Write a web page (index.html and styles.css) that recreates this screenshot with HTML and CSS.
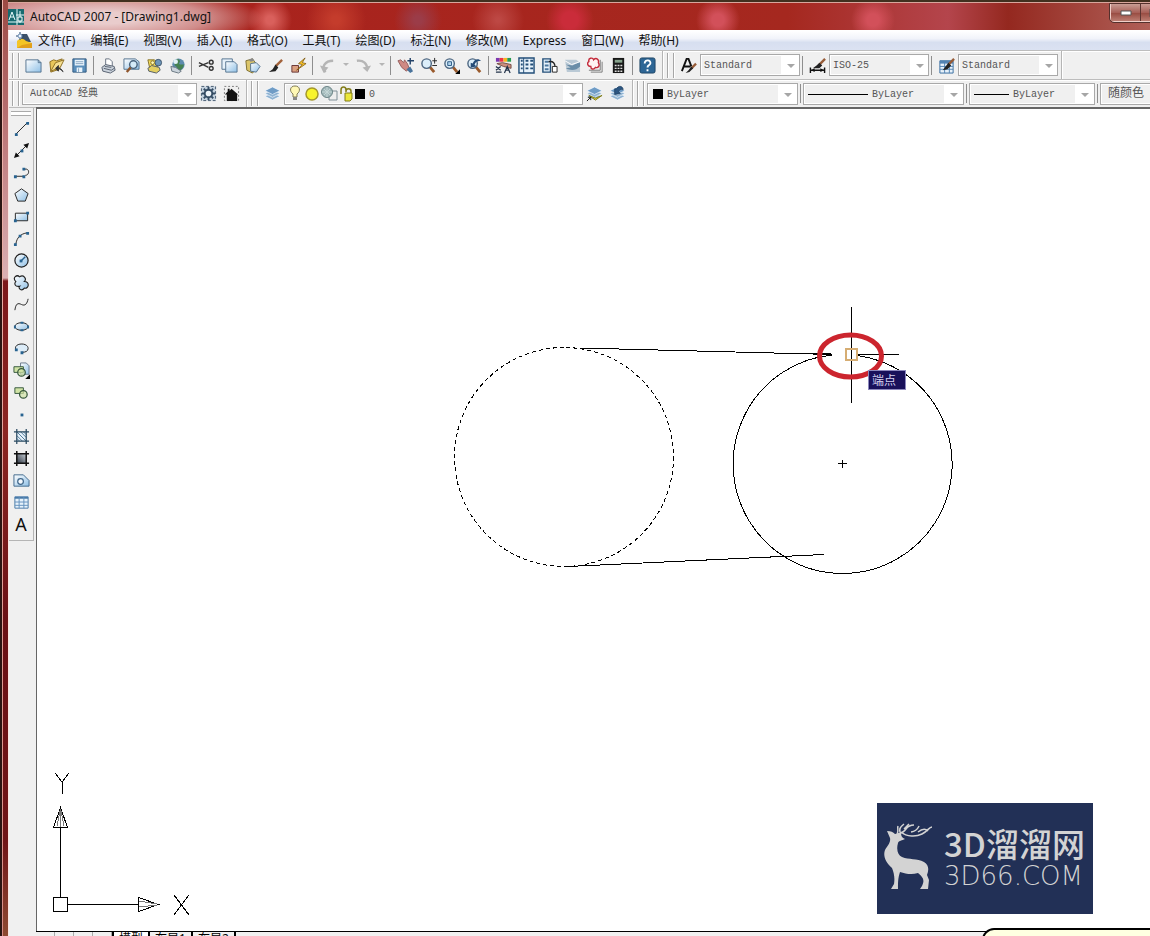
FILE: index.html
```html
<!DOCTYPE html>
<html lang="zh-CN">
<head>
<meta charset="utf-8">
<title>AutoCAD 2007 - [Drawing1.dwg]</title>
<link rel="stylesheet" href="styles.css">
</head>
<body>
<svg class="defs" aria-hidden="true">
  <defs>
    <linearGradient id="blue" x1="0" y1="0" x2="1" y2="1"><stop offset="0" stop-color="#fff"/><stop offset="1" stop-color="#8fc0e6"/></linearGradient>
    <linearGradient id="shade" x1="0" y1="1" x2="1" y2="0"><stop offset="0" stop-color="#2b333f"/><stop offset="1" stop-color="#c8cfd6"/></linearGradient>
    <symbol id="lens" viewBox="0 0 18 18"><path d="M10 10l5 6" stroke="#9a5a2c" stroke-width="3"/><circle cx="7" cy="7" r="5" fill="#dceefa" stroke="#4d6680" stroke-width="1.5"/></symbol>
    <symbol id="brush" viewBox="0 0 18 18"><path d="M16 3L9 10" stroke="#a2623a" stroke-width="2.5"/><path d="M9 8l3 3-3 4-7 1 4-3z" fill="#222"/></symbol>
    <symbol id="stack" viewBox="0 0 18 18"><g fill="#8fb3d2" stroke="#f7fbff" stroke-width=".7"><path d="M1 12l8-4 8 4-8 4z"/><path d="M1 9l8-4 8 4-8 4z"/><path d="M1 6l8-4 8 4-8 4z" fill="#6f9cc6"/></g></symbol>
  </defs>
</svg>
<div class="window">
  <header class="titlebar">
    <svg class="appicon" width="16" height="16" viewBox="0 0 16 16"><path fill="#176b70" d="M0 0h16v16H0z"/><path d="M1 11L4 3l3 8M2 8h4M9 0v16M0 13h16M12 2v12M8 6h8" stroke="#e6fafa" fill="none"/><path d="M10 8h4v4h-4z" fill="#176b70" stroke="#fff"/></svg>
    <h1 class="caption">AutoCAD 2007 - [Drawing1.dwg]</h1>
    <div class="controls">
      <button class="ctl" aria-label="最小化"><svg width="12" height="6"><path d="M1 1h10v4H1z" fill="#fff" stroke="#555"/></svg></button>
      <button class="ctl" aria-label="还原"><svg width="12" height="10"><path d="M1 1h10v8H1zM4 4h4v2H4z" fill="#fff" fill-rule="evenodd" stroke="#555"/></svg></button>
    </div>
  </header>
  <div class="client">
    <nav class="menubar">
      <svg width="17" height="17" viewBox="0 0 17 17"><path d="M5 2h6l4 8H5z" fill="#3d5168"/><path d="M1 9c3-3 6-3 9 0l6 2v5H1z" fill="#f4c526"/><path d="M6 13l10-2v5H1z" fill="#e2a01c"/><path d="M4 0v8M0 4h8" stroke="#27466e"/><circle cx="4" cy="4" r="2" fill="#eef6ff" stroke="#6c8db3"/></svg>
      <a href="#">文件(F)</a><a href="#">编辑(E)</a><a href="#">视图(V)</a><a href="#">插入(I)</a><a href="#">格式(O)</a><a href="#">工具(T)</a><a href="#">绘图(D)</a><a href="#">标注(N)</a><a href="#">修改(M)</a><a href="#">Express</a><a href="#">窗口(W)</a><a href="#">帮助(H)</a>
    </nav>
    <div class="row">
      <div class="toolbar" role="toolbar" aria-label="标准">
        <i class="grip"></i>
        <button aria-label="新建"><svg viewBox="0 0 18 18"><path d="M1 3h13l3 3v10H1z" fill="url(#blue)" stroke="#54738f"/><path d="M14 3v3h3" fill="none" stroke="#54738f"/></svg></button>
        <button aria-label="打开"><svg viewBox="0 0 18 18"><path d="M2 5l4-2 3 1 6-2-3 11-9 3z" fill="#e8c65a" stroke="#8c6d22"/><path d="M3 15L8 6l9-3-4 8z" fill="#f5df92" stroke="#8c6d22"/><path d="M16 16c-1-3-3-4-5-4m0-3v6l-3-3z" fill="#333" stroke="#333"/></svg></button>
        <button aria-label="保存"><svg viewBox="0 0 18 18"><path d="M2 2h14v14H2z" fill="#5b8fbb" stroke="#2f587e"/><path d="M4 3h10v6H4zM6 11h6v5H6z" fill="#eaf4fb"/><path d="M5 5h8M5 7h8M8 12v4" stroke="#87a6c0"/></svg></button>
        <i class="sep"></i>
        <button aria-label="打印"><svg viewBox="0 0 18 18"><path d="M6 9V2h4l3 3v5" fill="#fff" stroke="#66717f"/><path d="M2 11l4-3 9 2 1 4-5 3-8-2z" fill="#cbd3dc" stroke="#56606e"/><path d="M4 12l8 2 3-2M5 10l7 1" stroke="#56606e" fill="none"/></svg></button>
        <button aria-label="打印预览"><svg viewBox="0 0 18 18"><path d="M1 2h12l4 3v8H1z" fill="url(#blue)" stroke="#54738f"/><circle cx="11" cy="8" r="4" fill="#d4eaf8" stroke="#48627c" stroke-width="1.500"/><path d="M8 11l-4 5" stroke="#8f552b" stroke-width="2.500"/></svg></button>
        <button aria-label="发布"><svg viewBox="0 0 18 18"><path d="M2 3h7l3 3v6H4z" fill="#f4dc5a" stroke="#836f25"/><circle cx="13" cy="6" r="3.500" fill="#6d95b9" stroke="#40566b"/><path d="M2 12l4-3 8 2 1 3-4 3-8-2z" fill="#e3cf62" stroke="#505a66"/><circle cx="7" cy="6" r="2" fill="#fff7b2" stroke="#836f25"/></svg></button>
        <button aria-label="三维 DWF"><svg viewBox="0 0 18 18"><circle cx="10" cy="8" r="6.500" fill="#5d8cae"/><path d="M6 4c4-4 7 0 5 2s3 2 5 2c-1 5-5 7-6 6s-1-4-4-5z" fill="#468252"/><circle cx="7" cy="5" r="2.500" fill="#e2f1f8"/><path d="M2 10l5 1 6 4-3 2-7-2z" fill="#cbd4dc" stroke="#687681"/></svg></button>
        <i class="sep"></i>
        <button aria-label="剪切"><svg viewBox="0 0 18 18"><path d="M1 6l10 5M1 10l10-4" stroke="#333" stroke-width="1.500"/><circle cx="14" cy="5.500" r="2" fill="none" stroke="#333" stroke-width="1.500"/><circle cx="14" cy="12" r="2" fill="none" stroke="#333" stroke-width="1.500"/></svg></button>
        <button aria-label="复制"><svg viewBox="0 0 18 18"><path d="M1 2h11v11H1z" fill="#e7f2fa" stroke="#54738f"/><path d="M5 5h9l3 3v8H5z" fill="url(#blue)" stroke="#54738f"/></svg></button>
        <button aria-label="粘贴"><svg viewBox="0 0 18 18"><path d="M2 4l7-2 6 8-6 7-6-3z" fill="#dcc66b" stroke="#7d6d2f"/><path d="M7 7l6-1 4 4-4 6-6-1z" fill="url(#blue)" stroke="#54738f"/><path d="M5 3l4-2 2 3-4 1z" fill="#888"/></svg></button>
        <button aria-label="特性匹配"><svg><use href="#brush"/></svg></button>
        <button aria-label="块编辑器"><svg viewBox="0 0 18 18"><path d="M2 9h7v7H2z" fill="#dba081" stroke="#633"/><path d="M16 1L9 7l4 1-6 6 10-7-4-1z" fill="#ffc928" stroke="#78530d" stroke-width=".8"/></svg></button>
        <i class="sep"></i>
        <button aria-label="放弃"><svg viewBox="0 0 18 18"><path d="M7 16C2 11 6 4 15 4" fill="none" stroke="#b5b5b5" stroke-width="2.500"/><path d="M1 9l9 2-5 6z" fill="#b5b5b5"/></svg></button><button class="drop" aria-label="放弃列表"><svg viewBox="0 0 6 4"><path d="M0 0h6L3 3z" fill="#b5b5b5"/></svg></button>
        <button aria-label="重做"><svg viewBox="0 0 18 18"><path d="M2 4c7-1 11 3 11 9" fill="none" stroke="#b5b5b5" stroke-width="2.500"/><path d="M8 11l9-2-4 7z" fill="#b5b5b5"/></svg></button><button class="drop" aria-label="重做列表"><svg viewBox="0 0 6 4"><path d="M0 0h6L3 3z" fill="#b5b5b5"/></svg></button>
        <i class="sep"></i>
        <button aria-label="实时平移"><svg viewBox="0 0 18 18"><path d="M1 4l3-1 3 3 1-3 3 4 2 5-3 3-5-4z" fill="#cf8983" stroke="#95605d"/><path d="M10 13l4-3 3 5-3 2z" fill="#49739b"/><path d="M14 1v7M11 4h7" stroke="#234268" stroke-width="1.500"/></svg></button>
        <button aria-label="实时缩放"><svg viewBox="0 0 18 18"><use href="#lens"/><path d="M13 4h5M15.500 1v6M13 9h5" stroke="#222"/></svg></button>
        <button aria-label="窗口缩放"><svg viewBox="0 0 18 18"><use href="#lens"/><path d="M5 5h4v4H5z" fill="#b1d3eb" stroke="#2c5b86"/><path d="M18 13v5h-5z"/></svg></button>
        <button aria-label="缩放上一个"><svg viewBox="0 0 18 18"><use href="#lens"/><path d="M5 6v5l6-1-2-2c1-3 4-4 7-4-3-3-7-2-9 3z" fill="#244c78"/></svg></button>
        <i class="sep"></i>
        <button aria-label="特性"><svg viewBox="0 0 18 18"><path d="M1 1h4v4H1z" fill="#7d38b0"/><path d="M5 1h4v4H5z" fill="#e34"/><path d="M9 1h4v4H9z" fill="#f6b521"/><path d="M13 1h4v4h-4z" fill="#279c50"/><path d="M2 7l6-1 9 2v4l-8-2z" fill="#cd8e7d" stroke="#734b44"/><path d="M1 10l5 4m0-4l-5 4m0 2h6m3 1l3-7 3 7m-5-3h4" fill="none" stroke="#24344b" stroke-width="1.300"/></svg></button>
        <button aria-label="设计中心"><svg viewBox="0 0 18 18"><path d="M1 1h16v16H1z" fill="#e7f2fb" stroke="#234e78" stroke-width="1.500"/><path d="M6 1v16" stroke="#234e78"/><path d="M3 4h2M3 8h2M3 12h2M8 4h3m2 0h3M8 8h3m2 0h3M8 12h3m2 0h3" stroke="#234e78" stroke-width="2"/></svg></button>
        <button aria-label="工具选项板"><svg viewBox="0 0 18 18"><path d="M2 2h8v14H2zM2 2v14" fill="#e7f2fb" stroke="#234e78" stroke-width="1.500"/><path d="M4 5h4M4 9h4M4 13h4" stroke="#4c779e" stroke-width="2"/><path d="M8 5c5-1 7 2 7 6" fill="none" stroke="#222" stroke-width="1.500"/><path d="M12 10h5v6h-5z" fill="#fff" stroke="#222"/></svg></button>
        <button aria-label="图纸集"><svg viewBox="0 0 18 18"><path d="M1 3h12l4 3v10H3z" fill="#bac9d5"/><path d="M2 8l7 1 8-4v5c-4 4-9 5-15 2l5-1z" fill="#6a8da8"/><path d="M1 4l7 4 9-3" stroke="#fff" fill="none"/></svg></button>
        <button aria-label="标记集"><svg viewBox="0 0 18 18"><path d="M4 16h12V5m-14 9h12V3" fill="none" stroke="#777"/><path d="M2 5c-1-4 4-5 5-2 3-3 6 0 5 3 2 3 0 6-3 5-2 3-5 2-5-1-4 0-4-4-2-5z" fill="#fff3f3" stroke="#c32b3b" stroke-width="1.500"/></svg></button>
        <button aria-label="快速计算器"><svg viewBox="0 0 18 18"><path d="M3 1h12v16H3z" fill="#181818"/><path d="M5 3h8v3H5z" fill="#86a28c"/><path d="M5 9h2m1 0h2m1 0h2M5 12h2m1 0h2m1 0h2M5 15h2m1 0h2m1 0h2" stroke="#ddd" stroke-width="1.500"/></svg></button>
        <i class="sep"></i>
        <button aria-label="帮助"><svg viewBox="0 0 18 18"><rect x="1" y="1" width="16" height="16" rx="2" fill="#2e6695" stroke="#1e4565"/><path d="M6 7c0-5 7-4 6 0-1 2-3 2-3 4m0 2v2" fill="none" stroke="#fff" stroke-width="2"/></svg></button>
        <i class="end"></i>
      </div>
      <div class="toolbar" role="toolbar" aria-label="样式">
        <i class="grip"></i>
        <button aria-label="文字样式" class="wide"><svg viewBox="0 0 18 18"><path d="M2 15L7 2h2l3 8M4 10h7" fill="none" stroke="#111" stroke-width="2"/><path d="M17 7l-5 5" stroke="#965b37" stroke-width="2.500"/><path d="M12 10l2 2-4 4-4 1 3-3z" fill="#222"/></svg></button>
        <select class="combo style" aria-label="文字样式列表"><option>Standard</option></select>
        <i class="sep"></i>
        <button aria-label="标注样式" class="wide"><svg viewBox="0 0 18 18"><path d="M1.500 11v6M16.500 11v6M2 14h14" stroke="#111" stroke-width="1.500"/><path d="M2 14l4-2v4zM16 14l-4-2v4z" fill="#111"/><path d="M17 2l-6 6" stroke="#965b37" stroke-width="2.500"/><path d="M11 6l3 3-3 3H4l4-3z" fill="#222"/></svg></button>
        <select class="combo style" aria-label="标注样式列表"><option>ISO-25</option></select>
        <i class="sep"></i>
        <button aria-label="表格样式" class="wide"><svg viewBox="0 0 18 18"><path d="M2 4h14v13H2z" fill="#e7f2fb" stroke="#356a9e"/><path d="M2 4h14v3H2z" fill="#5283b3"/><path d="M2 10h14M2 13h14M7 5v12M12 5v12" stroke="#5283b3"/><path d="M17 2l-6 6" stroke="#965b37" stroke-width="2.500"/><path d="M11 6l3 3-4 4-5 1 3-4z" fill="#222"/></svg></button>
        <select class="combo style" aria-label="表格样式列表"><option>Standard</option></select>
        <i class="end"></i>
      </div>
    </div>
    <div class="row">
      <div class="toolbar" role="toolbar" aria-label="工作空间">
        <i class="grip"></i>
        <select class="combo workspace" aria-label="工作空间列表"><option>AutoCAD 经典</option></select>
        <button aria-label="工作空间设置"><svg viewBox="0 0 18 18"><path d="M1.500 1.500h15v15h-15z" fill="#c3d1de" stroke="#42576c" stroke-dasharray="3 2"/><circle cx="9" cy="9" r="4" fill="#eef4f9" stroke="#334b63" stroke-width="2"/><path d="M9 2v3m0 8v3M2 9h3m8 0h3M4 4l2 2m6 6l2 2M14 4l-2 2m-6 6l-2 2" stroke="#334b63" stroke-width="2"/></svg></button>
        <button aria-label="我的工作空间"><svg viewBox="0 0 18 18"><path d="M1.500 1.500h15v15h-15z" fill="none" stroke="#777" stroke-dasharray="2 2"/><path d="M9 4l7 6h-1v7H4v-7H2l3-3V4h2v2z" fill="#111"/></svg></button>
        <i class="end"></i>
      </div>
      <div class="toolbar" role="toolbar" aria-label="图层">
        <i class="grip"></i>
        <button aria-label="图层特性管理器"><svg><use href="#stack"/></svg></button>
        <label class="combo layer"><svg width="78" height="18" viewBox="0 0 78 18"><path d="M7 1c5 0 6 5 2 8v3H5V9C1 6 2 1 7 1z" fill="#fff8b5" stroke="#827d56"/><path d="M5 12h4v3H5z" fill="#888"/><circle cx="24" cy="9" r="6" fill="#f7f32c" stroke="#a4982a" stroke-width="1.500"/><path d="M41 6h8v9h-8z" fill="#eee" stroke="#809098"/><circle cx="39" cy="7" r="5.500" fill="#a1b7b9" stroke="#6c8587"/><path d="M36 4l6 6m0-6l-6 6m3-8v10m-5-5h10" stroke="#c4d6d6"/><path d="M53 9V5c0-4 5-4 5 0v2m0-1c0-3 5-3 5 0v3" fill="none" stroke="#827d19" stroke-width="1.500"/><path d="M57 8h7v6l-2 2h-5z" fill="#ece83a" stroke="#827d19"/><path d="M67 4h10v10H67z"/></svg><select aria-label="图层"><option>0</option></select></label>
        <button aria-label="将对象的图层置为当前"><svg viewBox="0 0 18 18"><use href="#stack"/><path d="M3 11l7 3 7-3-7 5z" fill="#e2d547" stroke="#827d19"/><path d="M1 17l4-4m0 0v3m0-3H2" stroke="#111" fill="none"/></svg></button>
        <button aria-label="上一个图层"><svg viewBox="0 0 18 18"><use href="#stack"/><path d="M6 4v6l6-1-2-2c1-2 3-3 5-2 0-4-5-5-7-1z" fill="#2d5783" stroke="#173656" stroke-width=".7"/></svg></button>
        <i class="end"></i>
      </div>
      <div class="toolbar tail" role="toolbar" aria-label="对象特性">
        <i class="grip"></i>
        <label class="combo color"><svg width="12" height="12"><path d="M1 1h10v10H1z"/></svg><select aria-label="颜色"><option>ByLayer</option></select></label>
        <i class="sep"></i>
        <label class="combo linetype"><svg width="60" height="12"><path d="M0 6.500h60" stroke="#000"/></svg><select aria-label="线型"><option>ByLayer</option></select></label>
        <i class="sep"></i>
        <label class="combo weight"><svg width="35" height="12"><path d="M0 6.500h35" stroke="#000"/></svg><select aria-label="线宽"><option>ByLayer</option></select></label>
        <i class="sep"></i>
        <select class="combo plot" aria-label="打印样式"><option>随颜色</option></select>
      </div>
    </div>
    <main class="work">
      <aside class="side">
        <div class="palette" role="toolbar" aria-label="绘图">
          <i class="hgrip"></i>
          <button aria-label="直线"><svg viewBox="0 0 18 18"><path d="M3 15L15 3" stroke="#222"/><path d="M2 14h3v3H2zM14 2h3v3h-3z" fill="#286390"/></svg></button>
          <button aria-label="构造线"><svg viewBox="0 0 18 18"><path d="M3 15L15 3" stroke="#222"/><path d="M1 17l2-6 4 4zM17 1l-2 6-4-4z" fill="#111"/><path d="M8 8h3v3H8z" fill="#286390"/></svg></button>
          <button aria-label="多段线"><svg viewBox="0 0 18 18"><path d="M3 13h8M11 6c7-3 7 6 2 6" fill="none" stroke="#222"/><path d="M1 12h3v3H1zM10 12h3v3h-3zM10 4h3v3h-3z" fill="#286390"/></svg></button>
          <button aria-label="正多边形"><svg viewBox="0 0 18 18"><path d="M9 3l7 5-3 8H5L2 8z" fill="url(#blue)" stroke="#222"/></svg></button>
          <button aria-label="矩形"><svg viewBox="0 0 18 18"><path d="M2.500 5.500h13v8h-13z" fill="url(#blue)" stroke="#222"/><path d="M1 12h3v3H1zM14 4h3v3h-3z" fill="#286390"/></svg></button>
          <button aria-label="圆弧"><svg viewBox="0 0 18 18"><path d="M3 15C4 8 8 4 15 3" fill="none" stroke="#222"/><path d="M1 14h3v3H1zM6 5h3v3H6zM14 2h3v3h-3z" fill="#286390"/></svg></button>
          <button aria-label="圆"><svg viewBox="0 0 18 18"><circle cx="9" cy="9" r="7" fill="url(#blue)" stroke="#222" stroke-width="1.300"/><path d="M9 9l4-4" stroke="#286390" stroke-width="1.500"/><path d="M7 8h3v3H7z" fill="#286390"/></svg></button>
          <button aria-label="修订云线"><svg viewBox="0 0 18 18"><path d="M3 8C-1 4 4 0 7 3c4-3 8 2 5 5 6 0 5 8 0 7-3 4-7 0-5-2-5 1-6-3-4-5z" fill="url(#blue)" stroke="#222" stroke-width="1.200"/></svg></button>
          <button aria-label="样条曲线"><svg viewBox="0 0 18 18"><path d="M2 15c1-7 3-8 7-6s6-1 7-6" fill="none" stroke="#222"/></svg></button>
          <button aria-label="椭圆"><svg viewBox="0 0 18 18"><ellipse cx="9" cy="9" rx="7" ry="4" fill="url(#blue)" stroke="#222"/><path d="M8 4h3v2H8zM1 8h2v3H1zM15 8h2v3h-2zM8 12h3v2H8z" fill="#286390"/></svg></button>
          <button aria-label="椭圆弧"><svg viewBox="0 0 18 18"><path d="M3 10c-3-7 13-8 13-1 0 3-3 4-6 4" fill="#dcecf8" stroke="#222"/><path d="M2 9h3v3H2zM8 12h3v3H8z" fill="#286390"/></svg></button>
          <button aria-label="插入块"><svg viewBox="0 0 18 18"><path d="M8 1h6l3 3v9H8z" fill="url(#blue)" stroke="#678"/><path d="M1 5h10v6H1z" fill="#d0e3a5" stroke="#34563b"/><circle cx="9" cy="11" r="4" fill="#d0e3a5" fill-opacity=".7" stroke="#34563b" stroke-width="1.300"/><path d="M18 13v5h-5z"/></svg></button>
          <button aria-label="创建块"><svg viewBox="0 0 18 18"><path d="M2 4h9v6H2z" fill="#d0e3a5" stroke="#34563b"/><circle cx="11" cy="11" r="4" fill="#d0e3a5" fill-opacity=".7" stroke="#34563b" stroke-width="1.300"/></svg></button>
          <button aria-label="点"><svg viewBox="0 0 18 18"><path d="M8 8h3v3H8z" fill="#286390"/></svg></button>
          <button aria-label="图案填充"><svg viewBox="0 0 18 18"><path d="M4 4h10v10H4z" fill="#e7f2fb"/><path d="M4 8l6 6M4 4l10 10M8 4l6 6M4 11l3 3M11 4l3 3" stroke="#4d7898"/><path d="M4 1v16M14 1v16M1 4h16M1 14h16" stroke="#294960" stroke-width="1.300"/></svg></button>
          <button aria-label="渐变色"><svg viewBox="0 0 18 18"><path d="M4 4h10v10H4z" fill="url(#shade)"/><path d="M4 1v16M14 1v16M1 4h16M1 14h16" stroke="#111" stroke-width="1.600"/></svg></button>
          <button aria-label="面域"><svg viewBox="0 0 18 18"><path d="M1 3h10l6 6v6H1z" fill="url(#blue)" stroke="#40678a"/><circle cx="8" cy="10" r="3" fill="#f5faff" stroke="#40678a" stroke-width="1.300"/></svg></button>
          <button aria-label="表格"><svg viewBox="0 0 18 18"><path d="M2 3h14v12H2z" fill="#e7f2fb" stroke="#4779a8"/><path d="M2 3h14v2H2z" fill="#4779a8"/><path d="M2 8.500h14M2 12h14M6.500 3v12M11.500 3v12" stroke="#6391bd"/></svg></button>
          <button aria-label="多行文字" class="letter">A</button>
        </div>
      </aside>
      <section class="canvas" aria-label="绘图区">
        <svg class="drawing" shape-rendering="crispEdges" fill="none" stroke="#000">
          <g transform="translate(-37 -109)">
            <circle cx="564" cy="457" r="109.500" stroke-dasharray="4 3"/>
            <path d="M832 355A109.500 109.500 0 1 0 856 355.300"/>
            <path d="M580 348L832 354.500M803 353.500h28M568 566.500L824 554.500"/>
            <path d="M851.500 307v96M856 354.500h43M838 463.500h9M842.500 460v8"/>
          </g>
          <g transform="translate(-37 -109)" shape-rendering="auto"><path d="M846 349h11v11h-11z" stroke="#d6ad73" stroke-width="2"/><ellipse cx="850.500" cy="356" rx="31" ry="21" stroke="#cc252e" stroke-width="5"/></g>
        </svg>
        <span class="snap">端点</span>
        <svg class="ucs" width="140" height="146" viewBox="0 0 140 146" fill="none" stroke="#000" shape-rendering="crispEdges"><path d="M3 3l7 9 7-9M10.500 12v12M8.500 57v70M1.500 127.500h14v14h-14zM15 134.500h71M86.500 127.500v14l20-7zM1.500 57.500h14l-7-20zM122 125l15 20M137 125l-15 20"/><path d="M8.500 39v18M8 41l-3 15M9 41l3 15M87 131l18 3M87 137l18-2" stroke="#777"/></svg>
        <figure class="brand">
          <svg width="50" height="66" viewBox="0 0 50 66" fill="#d3d3d3"><path d="M3 8c4 0 6 1 8 3l6-1c0 3 1 5 4 6-3 2-6 1-7 4-2 7 0 12 4 14 7 3 15 1 22 5 5 3 5 8 3 13l2 5-1 9h-8l2-3c3-6 1-9-4-13-6 2-12 1-18-1-2 6-2 10-2 17H7l3-5c1-6 0-11-2-16C1 39-1 32 1 27c2-4 6-7 5-12z"/><path d="M13 11c2-4 0-5 1-8M17 11c-3-4-1-7 3-10M20 6l5-5M14 11c4-1 6-2 8-5 3-4 6-4 8-4M17 9c6 5 15 5 21 2s7-7 10-7M27 9c6-1 7-4 8-6M34 9c5-4 8-3 10-1" fill="none" stroke="#d3d3d3" stroke-width="1.500"/></svg>
          <figcaption><span class="zh">3D溜溜网</span><span class="en">3D66.COM</span></figcaption>
        </figure>
      </section>
    </main>
    <footer class="tabs">
      <div class="tabnav"><i></i><i></i><i></i><i></i></div>
      <a class="tab on" href="#">模型</a><a class="tab" href="#">布局1</a><a class="tab" href="#">布局2</a><i class="tabend"></i>
      <div class="balloon"></div>
    </footer>
  </div>
</div>
</body>
</html>
```
FILE: styles.css
```css
* { box-sizing: border-box; }
body { margin: 0; font: 12px/18px "Noto Sans", "Noto Sans CJK SC", sans-serif; color: #111; overflow: hidden; }
.defs { position: absolute; width: 0; height: 0; }
button { border: 0; background: none; padding: 0; font: inherit; color: inherit; }
svg { display: block; flex: none; }
i { display: block; flex: none; }

.window {
  height: 100vh;
  display: flex;
  flex-direction: column;
  padding-left: 8px;
  background:
    linear-gradient(#2b1512, #2b1512) 0 0 / 2px 100% no-repeat,
    linear-gradient(#f0b8b0, #d68d86) 2px 0 / 1px 100% no-repeat,
    linear-gradient(to bottom, #9c4a44 0, #b46a6a 100px, #dcb0b4 278px, #7c1719 281px, #8c2622 430px, #6b1115 620px, #701517 840px, #8e4a32 100%);
}
.titlebar {
  display: flex;
  align-items: center;
  gap: 6px;
  height: 30px;
  padding-top: 2px;
  border-top: 2px solid #41301f;
  box-shadow: inset 0 1px #d9a69c;
  background:
    radial-gradient(ellipse 160px 30px at 95px 16px, #e9cccc 20%, #d9a3a2cc 65%, transparent),
    radial-gradient(circle at 710px 18px, #d2505a 6px, transparent 22px),
    radial-gradient(circle at 865px 18px, #d2505a 6px, transparent 22px),
    radial-gradient(circle at 562px 18px, #ca2c3a 8px, transparent 24px),
    radial-gradient(circle at 490px 18px, #bd4844 2px, transparent 26px),
    radial-gradient(circle at 410px 18px, #9b3c48 4px, transparent 24px),
    radial-gradient(circle at 262px 18px, #d9605c 4px, transparent 22px),
    radial-gradient(circle at 328px 18px, #c43c2c 4px, transparent 30px),
    linear-gradient(to right, #b66 0, #a9231d 240px, #a5281f 780px, #b4454c 940px, #94281f 1000px, #b06058 100%);
}
.caption { flex: 1; margin: 0; font-size: 12px; font-weight: 400; line-height: 18px; white-space: nowrap; }
.controls { display: flex; align-self: flex-start; margin-right: -20px; border: 1px solid #f1cfc9; border-top: 0; border-radius: 0 0 4px 4px; outline: 1px solid #54302c; }
.ctl { display: grid; place-items: center; width: 29px; height: 17px; background: linear-gradient(#c99c94, #a86058 50%, #96493f 51%, #bc7d72); }
.ctl + .ctl { border-left: 1px solid #5c3531; }

.client { flex: 1; min-height: 0; display: flex; flex-direction: column; border-left: 1px solid #fbe6e2; border-top: 1px solid #fff; background: #f0f0f0; }
.menubar { display: flex; align-items: center; height: 19px; padding-left: 7px; gap: 15px; background: linear-gradient(#fff, #f1f3fa 40%, #d7dff0 60%, #dbe2f2); }
.menubar svg { margin-right: -10px; }
.menubar a { color: #111; text-decoration: none; white-space: nowrap; }

.row { display: flex; height: 29px; border-top: 1px solid #bdbdbd; box-shadow: inset 0 1px #fff; overflow: hidden; }
.row + .row { height: 28px; }
.toolbar { display: flex; align-items: center; flex: none; padding-left: 3px; }
.toolbar button { display: grid; place-items: center; width: 23px; height: 23px; flex: none; }
.toolbar button svg { width: 17px; height: 17px; }
.toolbar .drop { width: 13px; }
.toolbar .drop svg { width: 6px; height: 4px; }
.grip { width: 7px; height: 25px; margin-right: 3px; border: 1px solid #a6a6a6; border-width: 0 1px; box-shadow: inset 1px 0 #fff, 1px 0 #fff; }
.sep { width: 1px; height: 19px; margin: 0 3px 0 2px; background: #8e8e8e; }
.end { width: 2px; height: 100%; margin: 0 0 0 3px; border-left: 1px solid #b5b5b5; background: #fff; }
.toolbar .wide { width: 23px; }

.combo {
  height: 22px;
  border: 1px solid #a9a9a9;
  flex: none;
  display: flex;
  align-items: center;
  font: 10px/18px "Liberation Mono", "Noto Sans CJK SC", monospace;
  color: #555;
  background: #f0f0f0;
  box-shadow: inset 0 0 0 1px #fff;
}
.combo select { flex: 1; min-width: 0; height: 18px; margin-right: 1px; border: 0; font: inherit; color: inherit; }
.combo select, select.combo {
  appearance: none;
  border-radius: 0;
  padding: 1px 18px 0 3px;
  background: url("data:image/svg+xml,%3Csvg xmlns='http://www.w3.org/2000/svg' width='18' height='20'%3E%3Cpath fill='%23fff' d='M0 0h18v20H0z'/%3E%3Cpath fill='%23a6a6a6' d='M6 9h8l-4 4z'/%3E%3C/svg%3E") right center no-repeat #f0f0f0;
}
.style { width: 100px; }
select.workspace { width: 175px; padding-left: 7px; }
.layer { width: 299px; padding-left: 3px; }
.color { width: 151px; padding-left: 4px; }
.linetype { width: 161px; padding-left: 4px; }
.weight { width: 126px; padding-left: 4px; }
select.plot { width: 126px; padding-left: 7px; font-size: 12px; }
.linetype select, .weight select { padding-left: 4px; }
.tail .sep { margin: 0 2px; }

.work { flex: 1; min-height: 0; display: flex; }
.side { width: 27px; flex: none; border-top: 1px solid #bbb; }
.palette { width: 25px; display: flex; flex-direction: column; align-items: center; padding-bottom: 5px; border: 1px solid #b5b5b5; border-width: 0 1px 1px 0; }
.palette button { display: grid; place-items: center; width: 22px; height: 22px; }
.palette button svg { width: 17px; height: 17px; }
.hgrip { width: 20px; height: 5px; margin: 3px 0 1px; border: 1px solid #aaa; border-width: 1px 0; background: #fff; }
.palette .letter { font: 18px/22px "Noto Sans", sans-serif; }
.canvas { position: relative; flex: 1; min-width: 0; overflow: hidden; border: 1px solid #666; border-width: 2px 0 0 1px; background: #fff; }
.drawing { width: 100%; height: 100%; }
.snap { position: absolute; left: 831px; top: 261px; width: 38px; padding: 0 3px; border: 1px solid #8c88bd; background: #19115b; color: #d5d3f0; font-family: "Noto Sans CJK SC", sans-serif; }
.ucs { position: absolute; left: 15px; bottom: 15px; }
.brand { position: absolute; right: 57px; bottom: 17px; width: 216px; height: 111px; margin: 0; padding: 20px 6px 0 7px; display: flex; gap: 10px; background: #223056; color: #d3d3d3; }
.brand figcaption { display: flex; flex-direction: column; white-space: nowrap; }
.zh { font: 500 33px/40px "Noto Sans CJK SC", sans-serif; }
.en { font: 200 26px/26px "DejaVu Sans", sans-serif; }

.tabs { position: relative; flex: none; display: flex; height: 5px; margin-left: 27px; border-top: 1px solid #000; background: #f0f0f0; font-size: 12px; line-height: 14px; }
.tabnav { display: flex; width: 76px; }
.tabnav i { flex: 1; border-right: 1px solid #aaa; }
.tab { height: 14px; padding: 0 5px; color: #000; text-decoration: none; border-left: 2px solid #000; }
.tab.on { background: #fff; }
.tabend { width: 2px; height: 14px; background: #000; }
.balloon { position: absolute; right: 0; top: -4px; width: 168px; height: 20px; border: 2px solid #000; border-right: 0; border-radius: 12px 0 0 0; background: #ffffe1; }
```
